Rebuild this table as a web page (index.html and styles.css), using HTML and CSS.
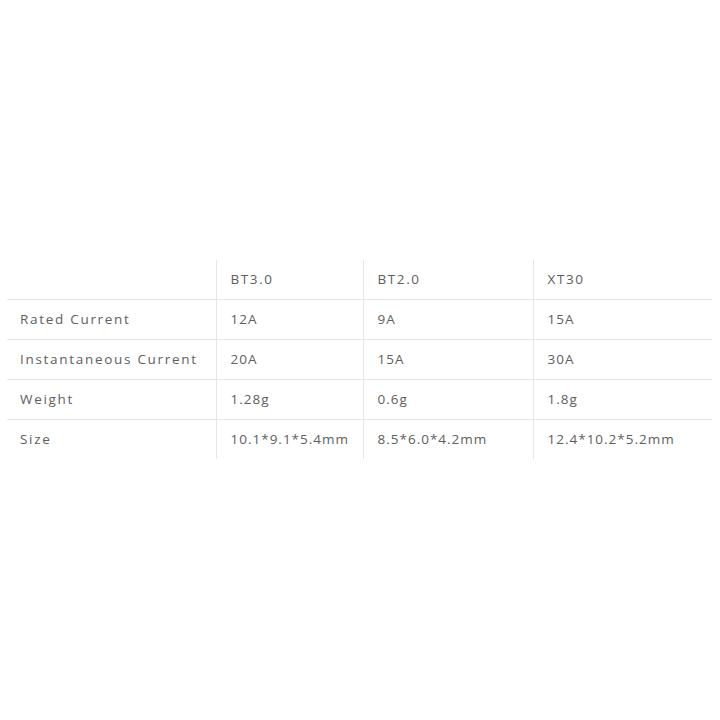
FILE: index.html
```html
<!DOCTYPE html>
<html>
<head>
<meta charset="utf-8">
<link rel="stylesheet" href="styles.css">
</head>
<body>
<div class="page">
  <table class="spec">
    <colgroup>
      <col class="c1"><col class="c2"><col class="c3"><col class="c4">
    </colgroup>
    <tr class="head"><td></td><td>BT3.0</td><td>BT2.0</td><td>XT30</td></tr>
    <tr><td>Rated Current</td><td>12A</td><td>9A</td><td>15A</td></tr>
    <tr><td>Instantaneous Current</td><td>20A</td><td>15A</td><td>30A</td></tr>
    <tr><td>Weight</td><td>1.28g</td><td>0.6g</td><td>1.8g</td></tr>
    <tr><td>Size</td><td>10.1*9.1*5.4mm</td><td>8.5*6.0*4.2mm</td><td>12.4*10.2*5.2mm</td></tr>
  </table>
</div>
</body>
</html>
```
FILE: styles.css
```css
html, body {
  margin: 0;
  padding: 0;
  background: #fff;
}
.page {
  height: 720px;
  display: flex;
  align-items: center;
  padding: 0 8px 2px 7px;
  box-sizing: border-box;
}
.spec {
  width: 705px;
  border-collapse: collapse;
  table-layout: fixed;
  font-family: "Open Sans", sans-serif;
  font-size: 13.5px;
  letter-spacing: 1px;
  color: #5e5e5e;
}
.c1 { width: 209px; }
.c2 { width: 147px; }
.c3 { width: 170px; }
.c4 { width: 179px; }
.spec td {
  height: 39px;
  padding: 0 0 0 14px;
  border-top: 1px solid #e8e6e3;
  border-left: 1px solid #e8e6e3;
  white-space: nowrap;
}
.spec td:first-child {
  border-left: none;
  padding-left: 13px;
  letter-spacing: 1.7px;
}
.spec .head td {
  border-top: none;
  letter-spacing: 1.6px;
}
```
